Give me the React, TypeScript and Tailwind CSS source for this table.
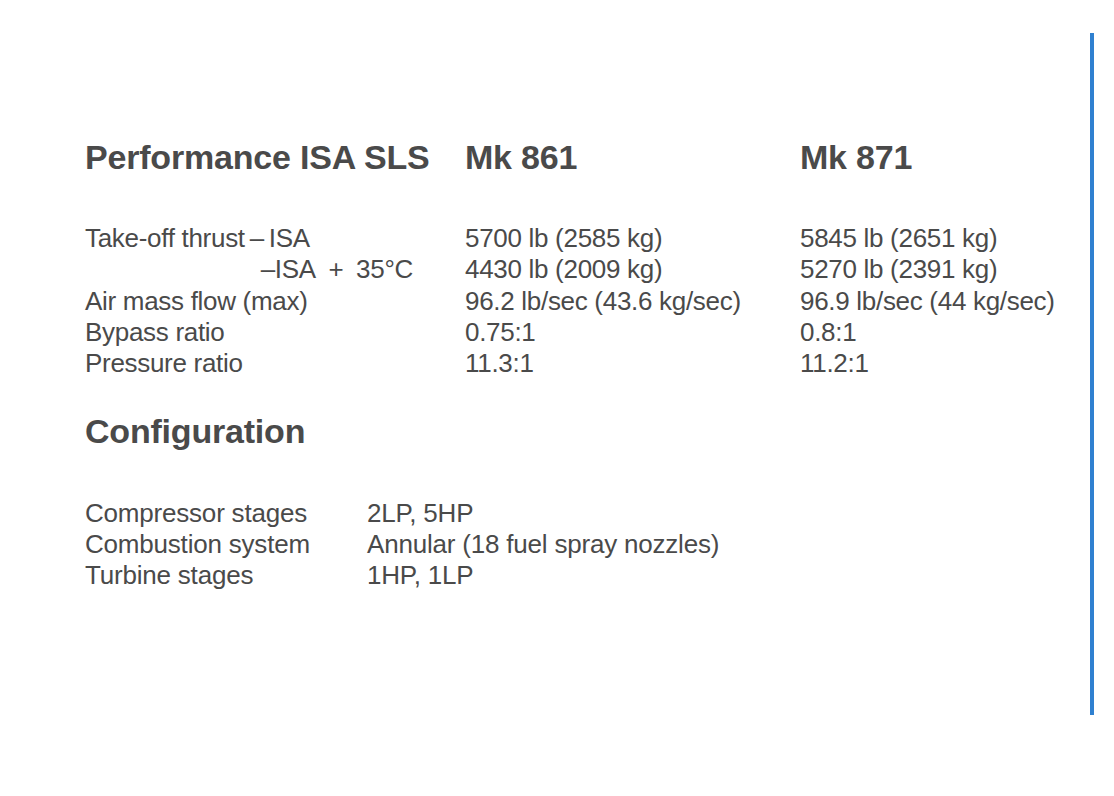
import React from 'react';

const perfRows: { label: React.ReactNode; a: string; b: string }[] = [
  { label: 'Take-off thrust\u2009–\u2009ISA', a: '5700 lb (2585 kg)', b: '5845 lb (2651 kg)' },
  { label: <span className="block pr-[52px] text-right">–ISA&ensp;+&ensp;35°C</span>, a: '4430 lb (2009 kg)', b: '5270 lb (2391 kg)' },
  { label: 'Air mass flow (max)', a: '96.2 lb/sec (43.6 kg/sec)', b: '96.9 lb/sec (44 kg/sec)' },
  { label: 'Bypass ratio', a: '0.75:1', b: '0.8:1' },
  { label: 'Pressure ratio', a: '11.3:1', b: '11.2:1' },
];

const configRows = [
  { label: 'Compressor stages', value: '2LP, 5HP' },
  { label: 'Combustion system', value: 'Annular (18 fuel spray nozzles)' },
  { label: 'Turbine stages', value: '1HP, 1LP' },
];

export default function App() {
  return (
    <div className="flex w-[1114px] h-[796px] bg-white text-[#4a4a4a] font-['Liberation_Sans',Arial,sans-serif]">
      <div className="flex-1 pl-[85px] pt-[137px]">
        {/* Performance header */}
        <div className="grid grid-cols-[380px_335px_1fr] text-[34px] leading-[40px] font-bold tracking-[-0.2px]">
          <div>Performance ISA SLS</div>
          <div>Mk 861</div>
          <div>Mk 871</div>
        </div>

        <div className="mt-[46px] text-[26px] leading-[31.3px] tracking-[-0.3px]">
          {perfRows.map((r, i) => (
            <div key={i} className="grid grid-cols-[380px_335px_1fr]">
              <div>{r.label}</div>
              <div>{r.a}</div>
              <div>{r.b}</div>
            </div>
          ))}
        </div>

        {/* Configuration */}
        <div className="mt-[32px] text-[34px] leading-[40px] font-bold tracking-[-0.2px]">Configuration</div>

        <div className="mt-[47px] text-[26px] leading-[31px] tracking-[-0.2px]">
          {configRows.map((r) => (
            <div key={r.label} className="grid grid-cols-[282px_1fr]">
              <div>{r.label}</div>
              <div>{r.value}</div>
            </div>
          ))}
        </div>
      </div>

      {/* blue edge rule */}
      <div className="w-[4px] h-[682px] mt-[33px] mr-[20px] bg-[#2f80d0]" />
    </div>
  );
}
